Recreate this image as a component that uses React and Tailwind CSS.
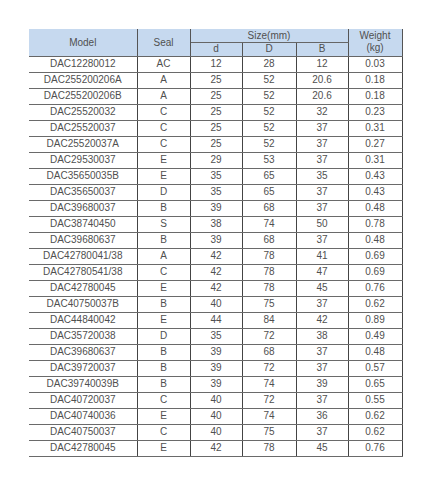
import React from 'react';

const rows = [
    ['DAC12280012', 'AC', '12', '28', '12', '0.03'],
    ['DAC255200206A', 'A', '25', '52', '20.6', '0.18'],
    ['DAC255200206B', 'A', '25', '52', '20.6', '0.18'],
    ['DAC25520032', 'C', '25', '52', '32', '0.23'],
    ['DAC25520037', 'C', '25', '52', '37', '0.31'],
    ['DAC25520037A', 'C', '25', '52', '37', '0.27'],
    ['DAC29530037', 'E', '29', '53', '37', '0.31'],
    ['DAC35650035B', 'E', '35', '65', '35', '0.43'],
    ['DAC35650037', 'D', '35', '65', '37', '0.43'],
    ['DAC39680037', 'B', '39', '68', '37', '0.48'],
    ['DAC38740450', 'S', '38', '74', '50', '0.78'],
    ['DAC39680637', 'B', '39', '68', '37', '0.48'],
    ['DAC42780041/38', 'A', '42', '78', '41', '0.69'],
    ['DAC42780541/38', 'C', '42', '78', '47', '0.69'],
    ['DAC42780045', 'E', '42', '78', '45', '0.76'],
    ['DAC40750037B', 'B', '40', '75', '37', '0.62'],
    ['DAC44840042', 'E', '44', '84', '42', '0.89'],
    ['DAC35720038', 'D', '35', '72', '38', '0.49'],
    ['DAC39680637', 'B', '39', '68', '37', '0.48'],
    ['DAC39720037', 'B', '39', '72', '37', '0.57'],
    ['DAC39740039B', 'B', '39', '74', '39', '0.65'],
    ['DAC40720037', 'C', '40', '72', '37', '0.55'],
    ['DAC40740036', 'E', '40', '74', '36', '0.62'],
    ['DAC40750037', 'C', '40', '75', '37', '0.62'],
    ['DAC42780045', 'E', '42', '78', '45', '0.76'],
];

const App = () => {
    return (
        <div className="w-[432px] h-[488px] bg-white pt-[29px] pl-[29px]" style={{ fontFamily: '"Liberation Sans", Arial, sans-serif' }}>
            <table className="border-collapse table-fixed text-[10px] leading-none text-[#505050]">
                <colgroup>
                    <col className="w-[108px]" />
                    <col className="w-[53px]" />
                    <col className="w-[52px]" />
                    <col className="w-[54px]" />
                    <col className="w-[52px]" />
                    <col className="w-[54px]" />
                </colgroup>
                <thead>
                    <tr className="h-[13px] bg-[#c6d9ef]">
                        <th rowSpan={2} className="font-normal border-r border-r-[#555] border-b border-b-[#666] pt-[1px]">Model</th>
                        <th rowSpan={2} className="font-normal border-r border-r-[#555] border-b border-b-[#666] pt-[1px]">Seal</th>
                        <th colSpan={3} className="font-normal border-r border-r-[#555] border-b border-b-[#666] pt-[1px]">Size(mm)</th>
                        <th rowSpan={2} className="font-normal border-r border-r-[#555] border-b border-b-[#666] leading-[12px]">Weight<br />(kg)</th>
                    </tr>
                    <tr className="h-[14px] bg-[#c6d9ef]">
                        <th className="font-normal border-r border-r-[#555] border-b border-b-[#666]">d</th>
                        <th className="font-normal border-r border-r-[#555] border-b border-b-[#666]">D</th>
                        <th className="font-normal border-r border-r-[#555] border-b border-b-[#666]">B</th>
                    </tr>
                </thead>
                <tbody>
                    {rows.map((r, i) => (
                        <tr key={i} className="h-[16px]">
                            {r.map((c, j) => (
                                <td key={j} className="text-center p-0 border-r border-r-[#444] border-b border-b-[#6a6a6a]">{c}</td>
                            ))}
                        </tr>
                    ))}
                </tbody>
            </table>
        </div>
    );
};

export default App;
